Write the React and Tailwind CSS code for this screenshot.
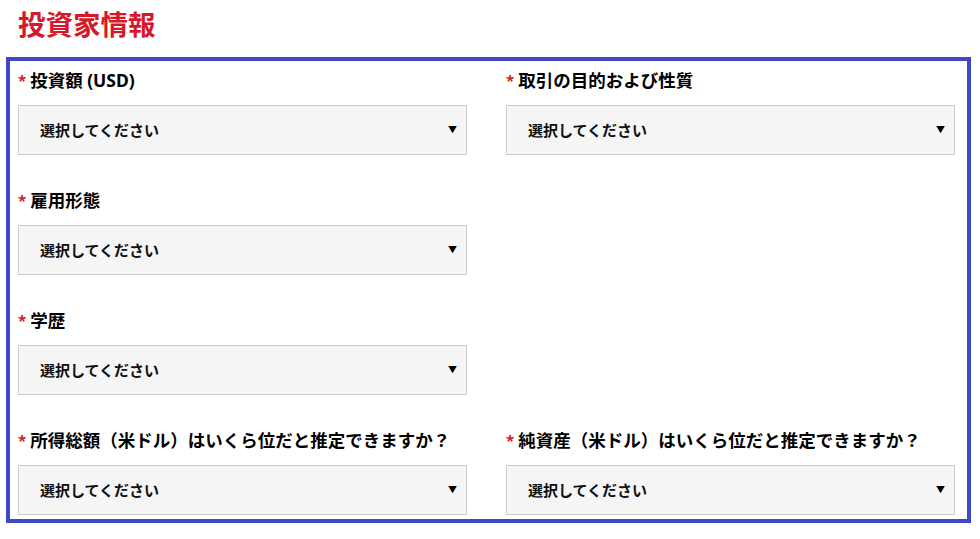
import React from "react";

const fields = [
  "投資額 (USD)",
  "取引の目的および性質",
  "雇用形態",
  null,
  "学歴",
  null,
  "所得総額（米ドル）はいくら位だと推定できますか？",
  "純資産（米ドル）はいくら位だと推定できますか？",
];

function Field({ label }) {
  return (
    <div className="flex flex-col">
      <div className="h-[24px] leading-[24px] text-[17.5px] font-bold text-black mb-[13px] flex items-center">
        <span className="text-[#d7182a] mr-[4px] text-[15px]">*</span>
        <span>{label}</span>
      </div>
      <div className="h-[50px] border border-[#cccccc] bg-[#f5f5f5] flex items-center justify-between pl-[21px] pr-[9px]">
        <span className="text-[15px] font-bold text-[#111]">選択してください</span>
        <span className="text-[9px] text-black">▼</span>
      </div>
    </div>
  );
}

function App() {
  return (
    <div
      className="w-[980px] h-[539px] bg-white overflow-hidden"
      style={{ fontFamily: '"Noto Sans", "Noto Sans CJK JP", sans-serif' }}
    >
      <h1 className="pl-[18px] pt-[7px] h-[57px] text-[27.5px] font-bold leading-[36px] text-[#d7182a]">
        投資家情報
      </h1>
      <div className="ml-[6px] w-[965px] h-[466px] border-4 border-[#4048c8] pl-[8px] pt-[7px]">
        <div className="grid grid-cols-[449px_449px] gap-x-[39px] gap-y-[33px]">
          {fields.map((f, i) =>
            f ? <Field key={i} label={f} /> : <div key={i} />
          )}
        </div>
      </div>
    </div>
  );
}

export default App;
